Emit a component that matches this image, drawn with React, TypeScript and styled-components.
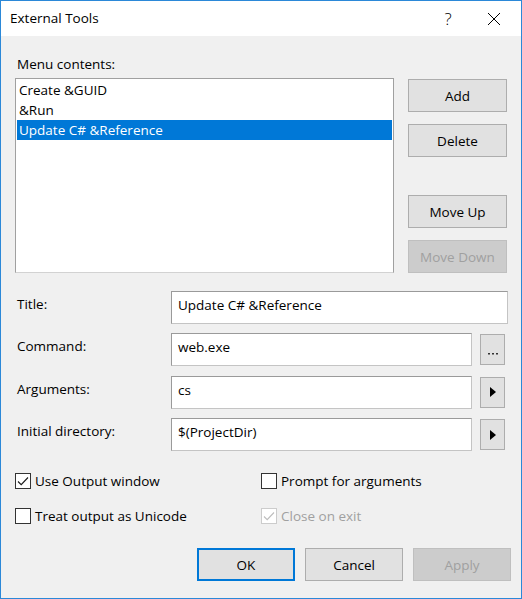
import React from "react";
import styled, { createGlobalStyle, css } from "styled-components";

const GlobalStyle = createGlobalStyle`
  html, body { margin: 0; padding: 0; background: #ffffff; }
  body {
    font-family: "Open Sans", "Noto Sans", sans-serif;
    font-size: 13.5px;
    color: #000000;
  }
  * { box-sizing: border-box; }
`;

const Window = styled.div`
  width: 522px;
  height: 599px;
  border: 1px solid #2b88d8;
  display: flex;
  flex-direction: column;
  background: #f0f0f0;
`;

const TitleBar = styled.div`
  height: 35px;
  flex: none;
  background: #ffffff;
  display: flex;
  align-items: center;
  padding-left: 9px;
  padding-right: 4px;
`;

const TitleText = styled.div`
  font-size: 13.5px;
  line-height: 20px;
  margin-top: -1px;
`;

const TitleButtons = styled.div`
  margin-left: auto;
  display: flex;
  height: 100%;
`;

const TitleButton = styled.div`
  width: 46px;
  height: 100%;
  display: flex;
  align-items: center;
  justify-content: center;
  font-size: 17px;
  font-weight: 300;
  color: #000;
`;

const Content = styled.div`
  flex: 1;
  display: flex;
  flex-direction: column;
  padding: 18px 9px 0 14px;
`;

const TopSection = styled.div`
  display: grid;
  grid-template-columns: 379px 99px;
  grid-template-rows: 20px 195px;
  column-gap: 14px;
  row-gap: 4px;
`;

const SectionLabel = styled.div`
  grid-column: 1 / 3;
  line-height: 20px;
  padding-left: 2px;
`;

const ListBox = styled.div`
  background: #ffffff;
  border: 1px solid #a0a0a0;
  border-bottom-color: #d2d2d2;
  padding: 1px;
  display: flex;
  flex-direction: column;
`;

const ListItem = styled.div<{ $selected?: boolean }>`
  height: 20px;
  line-height: 19px;
  padding: 1px 0 0 2px;
  white-space: nowrap;
  ${(p) =>
    p.$selected &&
    css`
      background: #0078d7;
      color: #ffffff;
    `}
`;

const SideButtons = styled.div`
  display: flex;
  flex-direction: column;
  gap: 12px;
  padding-top: 1px;
`;

const Spacer = styled.div`
  height: 25px;
`;

const Button = styled.button<{ $width?: number; $default?: boolean }>`
  width: ${(p) => p.$width ?? 99}px;
  height: 33px;
  flex: none;
  background: #e1e1e1;
  border: 1px solid #adadad;
  font-family: inherit;
  font-size: 13.5px;
  color: #000000;
  padding: 0;
  line-height: 20px;
  ${(p) =>
    p.$default &&
    css`
      border: 2px solid #0078d7;
    `}
  &:disabled {
    background: #cccccc;
    border-color: #bfbfbf;
    color: #a0a0a0;
  }
`;

const FormGrid = styled.div`
  margin-top: 18px;
  display: grid;
  grid-template-columns: 156px 337px;
  grid-auto-rows: 33px;
  row-gap: 9.4px;
`;

const FieldLabel = styled.div`
  padding-left: 2px;
  padding-top: 3px;
  line-height: 20px;
`;

const FieldRow = styled.div`
  display: flex;
  align-items: center;
  gap: 8px;
  padding-right: 3px;
`;

const TextBox = styled.div<{ $full?: boolean }>`
  height: 33px;
  flex: 1;
  background: #ffffff;
  border: 1px solid;
  border-color: #9a9a9a #c4c4c4 #c4c4c4 #9a9a9a;
  padding: 3px 6px 0;
  line-height: 20px;
  white-space: nowrap;
  ${(p) => p.$full && css`margin-right: -3px;`}
`;

const SmallButton = styled.button`
  width: 25px;
  height: 31px;
  flex: none;
  background: #e1e1e1;
  border: 1px solid #adadad;
  padding: 0;
  display: flex;
  align-items: center;
  justify-content: center;
`;

const Options = styled.div`
  margin-top: 20px;
  display: grid;
  grid-template-columns: 246px 1fr;
  grid-auto-rows: 20px;
  row-gap: 15px;
`;

const CheckItem = styled.label<{ $disabled?: boolean }>`
  display: flex;
  align-items: center;
  gap: 4px;
  line-height: 20px;
  color: ${(p) => (p.$disabled ? "#a0a0a0" : "#000000")};
`;

const Box = styled.span<{ $disabled?: boolean }>`
  width: 16px;
  height: 16px;
  flex: none;
  background: #ffffff;
  border: 1px solid ${(p) => (p.$disabled ? "#cccccc" : "#333333")};
  display: flex;
  align-items: center;
  justify-content: center;
`;

const Footer = styled.div`
  margin-top: 22px;
  display: flex;
  justify-content: flex-end;
  gap: 10px;
  padding-right: 1px;
`;

function Check({ checked, disabled, label }: { checked?: boolean; disabled?: boolean; label: string }) {
  return (
    <CheckItem $disabled={disabled}>
      <Box $disabled={disabled}>
        {checked && (
          <svg width="14" height="14" viewBox="0 0 14 14">
            <polyline
              points="2,7.5 5.2,10.7 12,3.5"
              fill="none"
              stroke={disabled ? "#bdbdbd" : "#1a1a1a"}
              strokeWidth="1.1"
            />
          </svg>
        )}
      </Box>
      {label}
    </CheckItem>
  );
}

function Arrow() {
  return (
    <svg width="8" height="12" viewBox="0 0 8 12">
      <polygon points="1,1 7,6 1,11" fill="#000000" />
    </svg>
  );
}

function Dots() {
  return (
    <svg width="12" height="12" viewBox="0 0 12 12">
      <rect x="1" y="9" width="2" height="1.5" fill="#333" />
      <rect x="5" y="9" width="2" height="1.5" fill="#333" />
      <rect x="9" y="9" width="2" height="1.5" fill="#333" />
    </svg>
  );
}

export default function App() {
  return (
    <>
      <GlobalStyle />
      <Window>
        <TitleBar>
          <TitleText>External Tools</TitleText>
          <TitleButtons>
            <TitleButton>?</TitleButton>
            <TitleButton>
              <svg width="14" height="14" viewBox="0 0 14 14">
                <path d="M1 1 L13 13 M13 1 L1 13" stroke="#000" strokeWidth="1" fill="none" />
              </svg>
            </TitleButton>
          </TitleButtons>
        </TitleBar>
        <Content>
          <TopSection>
            <SectionLabel>Menu contents:</SectionLabel>
            <ListBox>
              <ListItem>Create &amp;GUID</ListItem>
              <ListItem>&amp;Run</ListItem>
              <ListItem $selected>Update C# &amp;Reference</ListItem>
            </ListBox>
            <SideButtons>
              <Button>Add</Button>
              <Button>Delete</Button>
              <Spacer />
              <Button>Move Up</Button>
              <Button disabled>Move Down</Button>
            </SideButtons>
          </TopSection>

          <FormGrid>
            <FieldLabel>Title:</FieldLabel>
            <FieldRow>
              <TextBox $full>Update C# &amp;Reference</TextBox>
            </FieldRow>
            <FieldLabel>Command:</FieldLabel>
            <FieldRow>
              <TextBox>web.exe</TextBox>
              <SmallButton>
                <Dots />
              </SmallButton>
            </FieldRow>
            <FieldLabel>Arguments:</FieldLabel>
            <FieldRow>
              <TextBox>cs</TextBox>
              <SmallButton>
                <Arrow />
              </SmallButton>
            </FieldRow>
            <FieldLabel>Initial directory:</FieldLabel>
            <FieldRow>
              <TextBox>$(ProjectDir)</TextBox>
              <SmallButton>
                <Arrow />
              </SmallButton>
            </FieldRow>
          </FormGrid>

          <Options>
            <Check checked label="Use Output window" />
            <Check label="Prompt for arguments" />
            <Check label="Treat output as Unicode" />
            <Check checked disabled label="Close on exit" />
          </Options>

          <Footer>
            <Button $width={98} $default>OK</Button>
            <Button $width={98}>Cancel</Button>
            <Button $width={98} disabled>Apply</Button>
          </Footer>
        </Content>
      </Window>
    </>
  );
}
